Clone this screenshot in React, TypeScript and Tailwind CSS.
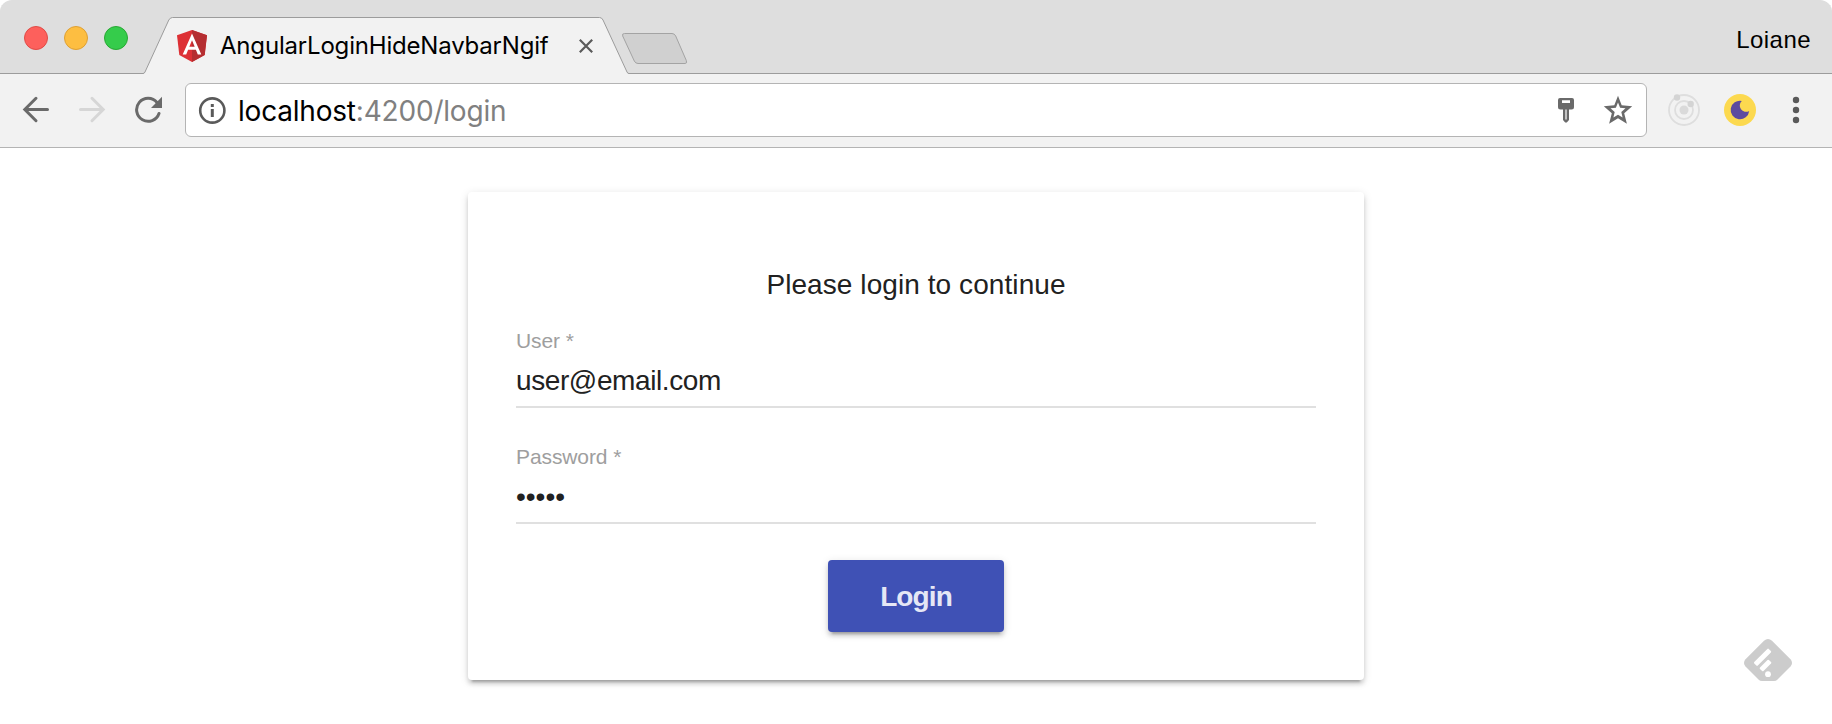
import React from "react";

function TrafficLights() {
  return (
    <div className="flex gap-4 pl-6 pt-[26px]">
      <span className="size-6 rounded-full border border-[#e04b46] bg-[#fd605c]" />
      <span className="size-6 rounded-full border border-[#dea034] bg-[#fdbe41]" />
      <span className="size-6 rounded-full border border-[#28a833] bg-[#35cc4b]" />
    </div>
  );
}

function AngularLogo() {
  return (
    <svg viewBox="0 0 30 32" className="h-8 w-[30px] shrink-0">
      <path d="M15 0 30 5.3 27.7 25 15 32 2.3 25 0 5.3Z" fill="#dd3035" />
      <path d="M15 0 30 5.3 27.7 25 15 32Z" fill="#b52e31" />
      <path
        fillRule="evenodd"
        d="M15 3.6 5.7 24.4H9.2L11.1 19.7H18.9L20.8 24.4H24.3ZM15 10.2 17.7 16.8H12.3Z"
        fill="#fff"
      />
    </svg>
  );
}

function TabStrip() {
  return (
    <div className="flex h-[74px] rounded-t-[12px] bg-[#dedede] shadow-[inset_0_-1px_0_#9c9c9c]">
      <TrafficLights />
      <div className="relative ml-[14px] h-[74px] w-[488px]">
        <svg viewBox="0 0 488 74" className="absolute inset-0 h-[74px] w-[488px]">
          <path
            d="M0 73.5H1Q2.3 73.5 3 72L26.8 20Q28.2 17.5 30.5 17.5H457.5Q459.8 17.5 461 20L485 72Q485.6 73.5 487 73.5H488V74H0Z"
            fill="#f2f2f2"
          />
          <path
            d="M0 73.5H1Q2.3 73.5 3 72L26.8 20Q28.2 17.5 30.5 17.5H457.5Q459.8 17.5 461 20L485 72Q485.6 73.5 487 73.5H488"
            fill="none"
            stroke="#9c9c9c"
          />
        </svg>
        <div className="relative flex h-full items-center pl-[35px] pt-[18px]">
          <AngularLogo />
          <span className="ml-[13px] w-[331px] whitespace-nowrap font-['Inter',sans-serif] text-[24px] leading-8 tracking-[-0.19px] text-black">
            AngularLoginHideNavbarNgif
          </span>
          <svg viewBox="0 0 14 14" className="ml-[28px] size-[14px] shrink-0">
            <path d="M.8.8 13.2 13.2M13.2.8.8 13.2" stroke="#5a5a5a" strokeWidth="2.2" />
          </svg>
        </div>
      </div>
      <svg viewBox="0 0 68 33" className="-ml-[10px] mt-8 h-[33px] w-[68px]">
        <path
          d="M4.5 1.5H52Q54.5 1.5 55.7 4L66.3 28.5Q67.5 31.5 65 31.5H18Q15.5 31.5 14.3 29L2.7 4Q1.8 1.5 4.5 1.5Z"
          fill="#d0d0d0"
          stroke="#a3a3a3"
        />
      </svg>
      <span className="ml-auto mr-[21px] mt-6 font-['Liberation_Sans',sans-serif] text-[24px] leading-8 tracking-[0.45px] text-black">
        Loiane
      </span>
    </div>
  );
}

function Toolbar() {
  return (
    <div className="flex h-[74px] items-center border-b border-[#b4b4b4] bg-[#f2f2f2] pb-px pl-[22px] pr-8">
      <svg
        viewBox="0 0 28 28"
        className="size-7"
        fill="none"
        stroke="#6a6a6a"
        strokeWidth="3"
        strokeLinecap="round"
      >
        <path d="M25.5 13.5H3.2M14 2.3 2.8 13.5 14 24.7" />
      </svg>
      <svg
        viewBox="0 0 28 28"
        className="ml-7 size-7"
        fill="none"
        stroke="#d6d6d6"
        strokeWidth="3"
        strokeLinecap="round"
      >
        <path d="M2.5 13.5H24.8M14 2.3 25.2 13.5 14 24.7" />
      </svg>
      <svg viewBox="0 0 28 28" className="ml-7 size-7">
        <path
          d="M23 6.5A11.5 11.5 0 1 0 25 17.500"
          fill="none"
          stroke="#6a6a6a"
          strokeWidth="3"
          strokeLinecap="round"
        />
        <path d="M28 .8V12H17Z" fill="#6a6a6a" />
      </svg>
      <div className="ml-[23px] flex h-[54px] w-[1462px] items-center rounded-[6px] border border-[#b4b4b4] bg-white pl-3 pr-[13px]">
        <svg viewBox="0 0 28 28" className="size-7 shrink-0">
          <circle cx="14.3" cy="14.5" r="12.1" fill="none" stroke="#5a5a5a" strokeWidth="2.6" />
          <path d="M12.8 8h3v3h-3zM12.8 13h3v8h-3z" fill="#5a5a5a" />
        </svg>
        <span className="ml-[12px] whitespace-nowrap pt-[2px] font-['Inter',sans-serif] text-[28px] leading-9 tracking-[-0.2px] text-[#808080]">
          <span className="text-black">localhost</span>:4200/login
        </span>
        <svg viewBox="0 0 16 25" className="ml-auto h-[25px] w-4">
          <path
            fillRule="evenodd"
            d="M2 0H14Q16 0 16 2V9Q16 11.5 13.5 11.5H11V22L8.8 24.5H7.2L5 22V11.5H2.5Q0 11.5 0 9V2Q0 0 2 0ZM4 2.2V5H12V2.2ZM7.4 11.5V21.5H8.6V11.5Z"
            fill="#6a6a6a"
          />
        </svg>
        <svg viewBox="0 0 30 30" className="ml-[29px] size-[30px]">
          <path
            fillRule="evenodd"
            d="M15 .8 18.7 10.3 29.2 11.3 21.2 18.2 23.9 28.8 15 23.2 6.1 28.8 8.8 18.2.8 11.3 11.3 10.3ZM15 7.6 12.9 12.7 7.5 13.2 11.7 16.9 10.4 22.6 15 19.7 19.6 22.6 18.3 16.9 22.5 13.2 17.1 12.7Z"
            fill="#6a6a6a"
          />
        </svg>
      </div>
      <svg viewBox="0 0 32 32" className="ml-[21px] size-8">
        <g fill="none" stroke="#dedede" strokeWidth="1.8">
          <circle cx="16" cy="16" r="15" />
          <circle cx="16" cy="16" r="9" />
        </g>
        <circle cx="16" cy="16" r="4.5" fill="#dadada" />
        <circle cx="9" cy="3.5" r="3.2" fill="#d4d4d4" />
        <circle cx="22.7" cy="10" r="3.2" fill="#d4d4d4" />
      </svg>
      <svg viewBox="0 0 32 32" className="ml-6 size-8">
        <circle cx="16" cy="16" r="16" fill="#fcd94f" />
        <path d="M17.8 6.9A6.3 6.3 0 0 0 25.2 17A9.3 9.3 0 1 1 17.8 6.9Z" fill="#5d4b9f" />
      </svg>
      <svg viewBox="0 0 8 28" className="ml-auto h-7 w-2" fill="#5a5a5a">
        <circle cx="4" cy="4" r="3.2" />
        <circle cx="4" cy="14" r="3.2" />
        <circle cx="4" cy="24" r="3.2" />
      </svg>
    </div>
  );
}

function Field({ label, type, value }: { label: string; type: string; value: string }) {
  return (
    <label className="flex h-[116px] flex-col">
      <span className="text-[21px] leading-6 tracking-[-0.1px] text-[#9e9e9e]">{label} *</span>
      <input
        type={type}
        defaultValue={value}
        className={
          type === "password"
            ? "mt-2 h-[47px] w-full border-b-2 border-[#e0e0e0] bg-transparent pb-[6px] text-[28px] leading-8 text-[#212121] outline-none"
            : "mt-2 h-[47px] w-full border-b-2 border-[#e0e0e0] bg-transparent pb-[5px] text-[28px] leading-8 tracking-[-0.4px] text-[#212121] outline-none"
        }
      />
    </label>
  );
}

function LoginCard() {
  return (
    <form className="flex h-[488px] w-[896px] flex-col rounded-[4px] bg-white px-12 pt-[77px] font-['Liberation_Sans',sans-serif] shadow-[0_6px_2px_-4px_rgba(0,0,0,0.2),0_4px_4px_0_rgba(0,0,0,0.14),0_2px_10px_0_rgba(0,0,0,0.12)]">
      <h1 className="text-center text-[28px] leading-8 tracking-[0.08px] text-[#212121]">
        Please login to continue
      </h1>
      <div className="mt-7">
        <Field label="User" type="text" value="user@email.com" />
        <Field label="Password" type="password" value="admin" />
      </div>
      <button
        type="button"
        className="-mt-px h-[72px] w-[176px] shrink-0 self-center rounded-[4px] bg-[#3f51b5] pt-[2px] text-[28px] font-bold tracking-[-0.9px] text-[#e5e7f5] shadow-[0_6px_2px_-4px_rgba(0,0,0,0.2),0_4px_4px_0_rgba(0,0,0,0.14),0_2px_10px_0_rgba(0,0,0,0.12)]"
      >
        Login
      </button>
    </form>
  );
}

function FeedlyBadge() {
  return (
    <svg viewBox="0 0 48 42" className="absolute bottom-[43px] right-10 h-[42px] w-12">
      <path
        d="M20 1.8Q24-1.8 28 1.8L46.5 20.3Q49.5 24 46.5 27.5L33.5 40.5Q32 42 30 42H18Q16 42 14.5 40.5L1.5 27.5Q-1.5 24 1.5 20.3Z"
        fill="#ccc"
      />
      <g fill="#fff">
        <rect x="8.3" y="15.7" width="20.5" height="5" rx="1" transform="rotate(-45 18.6 18.2)" />
        <rect x="15.2" y="24" width="12.6" height="5" rx="1" transform="rotate(-45 21.5 26.5)" />
        <circle cx="24" cy="35.2" r="2.9" />
      </g>
    </svg>
  );
}

export default function App() {
  return (
    <div className="relative flex h-[724px] w-[1832px] flex-col overflow-hidden bg-white">
      <TabStrip />
      <Toolbar />
      <main className="flex flex-1 justify-center pt-11">
        <LoginCard />
      </main>
      <FeedlyBadge />
    </div>
  );
}
